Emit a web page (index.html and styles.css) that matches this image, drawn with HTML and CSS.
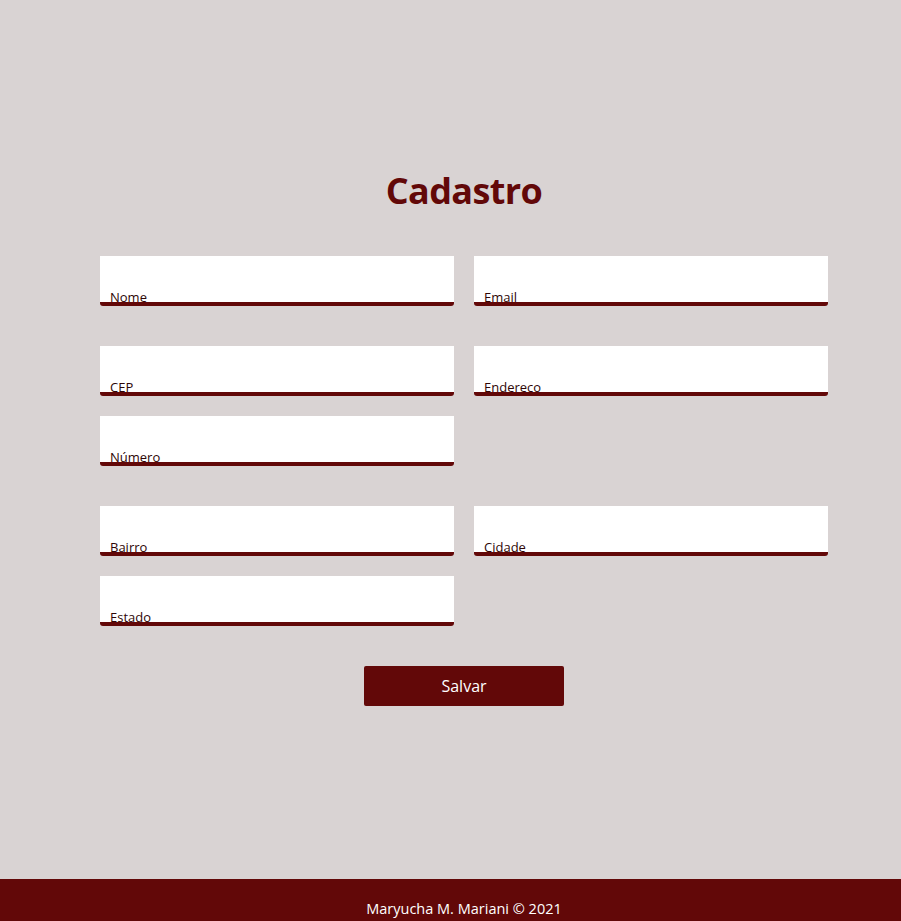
FILE: index.html
```html
<!DOCTYPE html>
<html lang="pt-BR">
<head>
<meta charset="utf-8">
<title>Cadastro</title>
<link rel="stylesheet" href="styles.css">
</head>
<body>
<main class="page">
  <h1 class="title">Cadastro</h1>
  <form class="form">
    <div class="group">
      <label class="field"><input type="text"><span class="label">Nome</span></label>
      <label class="field"><input type="text"><span class="label">Email</span></label>
    </div>
    <div class="group">
      <label class="field"><input type="text"><span class="label">CEP</span></label>
      <label class="field"><input type="text"><span class="label">Endereco</span></label>
      <label class="field"><input type="text"><span class="label">Número</span></label>
    </div>
    <div class="group">
      <label class="field"><input type="text"><span class="label">Bairro</span></label>
      <label class="field"><input type="text"><span class="label">Cidade</span></label>
      <label class="field"><input type="text"><span class="label">Estado</span></label>
    </div>
    <div class="actions">
      <button type="button" class="btn">Salvar</button>
    </div>
  </form>
</main>
<footer class="footer">Maryucha M. Mariani © 2021</footer>
</body>
</html>
```
FILE: styles.css
```css
html, body {
  margin: 0;
  padding: 0;
}
body {
  background: #d9d3d3;
  font-family: "Open Sans", "Noto Sans", sans-serif;
  min-height: 921px;
  display: flex;
  flex-direction: column;
}
.page {
  flex: 1;
  padding: 166px 73px 0 100px;
}
.title {
  margin: 0;
  text-align: center;
  color: #620808;
  font-size: 36px;
  font-weight: 700;
  line-height: 50px;
  letter-spacing: -0.6px;
}
.form {
  margin-top: 40px;
  width: 728px;
}
.group {
  display: grid;
  grid-template-columns: 354px 354px;
  column-gap: 20px;
  row-gap: 20px;
  margin-bottom: 40px;
}
.field {
  position: relative;
  display: block;
  height: 50px;
}
.field input {
  box-sizing: border-box;
  display: block;
  width: 100%;
  height: 50px;
  margin: 0;
  padding: 0 10px;
  border: none;
  border-bottom: 4px solid #620808;
  border-radius: 0 0 3px 3px;
  background: #ffffff;
  outline: none;
  font-family: inherit;
}
.label {
  position: absolute;
  left: 10px;
  bottom: 1px;
  font-size: 13px;
  line-height: 16px;
  font-weight: 500;
  color: #2e0606;
  pointer-events: none;
}
.actions {
  display: flex;
  justify-content: center;
}
.btn {
  width: 200px;
  height: 40px;
  border: none;
  border-radius: 2px;
  background: #620808;
  color: #ffffff;
  font-family: inherit;
  font-size: 16px;
}
.footer {
  height: 42px;
  background: #620808;
  color: #ffffff;
  font-size: 14.5px;
  display: flex;
  align-items: flex-end;
  justify-content: center;
  padding-left: 27px;
  padding-bottom: 3px;
  box-sizing: border-box;
}
```
